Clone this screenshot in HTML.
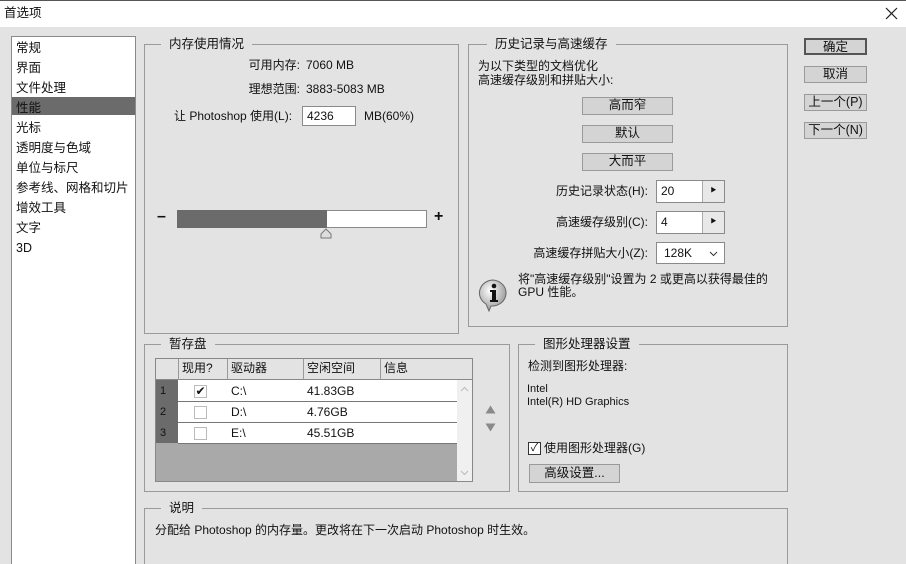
<!DOCTYPE html><html><head><meta charset="utf-8"><style>
*{margin:0;padding:0;box-sizing:border-box}
html,body{width:906px;height:564px;overflow:hidden}
body{background:#e3e3e3;font-family:"Liberation Sans","Noto Sans CJK SC",sans-serif;font-size:12px;color:#111;position:relative}
.a{position:absolute;white-space:nowrap;line-height:14px}
.g{position:absolute;border:1px solid #9a9a9a}
.gt{position:absolute;background:#e3e3e3;padding:0 8px;top:-8px;left:16px;line-height:14px;font-size:12.5px}
.btn{position:absolute;background:#d4d4d4;border:1px solid #9a9a9a;text-align:center;line-height:15px;font-size:12.5px}
.in{position:absolute;background:#fff;border:1px solid #8a8a8a;padding-left:4px;line-height:18px}
.r{text-align:right}
</style></head><body>
<div class="a" style="left:0;top:0;width:906px;height:27px;background:#fff"></div>
<div class="a" style="left:0;top:0;width:906px;height:1px;background:#555"></div>
<div class="a" style="left:4px;top:6px;font-size:12.5px">首选项</div>
<svg class="a" style="left:885px;top:7px" width="13" height="13"><path d="M1 1L12 12M12 1L1 12" stroke="#222" stroke-width="1.2"/></svg>

<div class="a" style="left:11px;top:36px;width:125px;height:540px;background:#fff;border:1px solid #8a8a8a"></div>
<div class="a" style="left:12px;top:97px;width:123px;height:18px;background:#6b6b6b"></div>
<div class="a" style="left:16px;top:38px;line-height:20px;font-size:12.5px">常规<br>界面<br>文件处理<br>性能<br>光标<br>透明度与色域<br>单位与标尺<br>参考线、网格和切片<br>增效工具<br>文字<br>3D</div>

<div class="g" style="left:144px;top:44px;width:315px;height:290px"><div class="gt">内存使用情况</div></div>
<div class="a r" style="left:200px;top:58px;width:100px">可用内存:</div><div class="a" style="left:306px;top:58px">7060 MB</div>
<div class="a r" style="left:200px;top:82px;width:100px">理想范围:</div><div class="a" style="left:306px;top:82px">3883-5083 MB</div>
<div class="a" style="left:174px;top:109px">让 Photoshop 使用(L):</div>
<div class="in" style="left:302px;top:106px;width:54px;height:20px">4236</div>
<div class="a" style="left:364px;top:109px">MB(60%)</div>
<div class="a" style="left:157px;top:210px;font-size:16px;font-weight:bold">–</div>
<div class="a" style="left:177px;top:210px;width:250px;height:18px;background:#fff;border:1px solid #8a8a8a"></div>
<div class="a" style="left:177px;top:210px;width:150px;height:18px;background:#6b6b6b"></div>
<div class="a" style="left:434px;top:210px;font-size:16px;font-weight:bold">+</div>
<svg class="a" style="left:320px;top:228px" width="12" height="11"><path d="M1 10 L1 6 L6 1 L11 6 L11 10 Z" fill="#ddd" stroke="#777"/></svg>

<div class="g" style="left:468px;top:44px;width:320px;height:283px"><div class="gt" style="left:18px">历史记录与高速缓存</div></div>
<div class="a" style="left:478px;top:59px;line-height:14px">为以下类型的文档优化<br>高速缓存级别和拼贴大小:</div>
<div class="btn" style="left:582px;top:97px;width:91px;height:18px">高而窄</div>
<div class="btn" style="left:582px;top:125px;width:91px;height:18px">默认</div>
<div class="btn" style="left:582px;top:153px;width:91px;height:18px">大而平</div>
<div class="a r" style="left:500px;top:184px;width:148px">历史记录状态(H):</div>
<div class="in" style="left:656px;top:180px;width:69px;height:23px;line-height:21px">20</div>
<div class="a" style="left:702px;top:181px;width:22px;height:21px;background:#e8e8e8;border-left:1px solid #aaa;text-align:center;line-height:21px;font-size:6px">▶</div>
<div class="a r" style="left:500px;top:215px;width:148px">高速缓存级别(C):</div>
<div class="in" style="left:656px;top:211px;width:69px;height:23px;line-height:21px">4</div>
<div class="a" style="left:702px;top:212px;width:22px;height:21px;background:#e8e8e8;border-left:1px solid #aaa;text-align:center;line-height:21px;font-size:6px">▶</div>
<div class="a r" style="left:500px;top:246px;width:148px">高速缓存拼贴大小(Z):</div>
<div class="in" style="left:656px;top:242px;width:69px;height:22px;line-height:20px;padding-left:7px">128K<svg style="position:absolute;right:6px;top:8px" width="9" height="6"><path d="M1 1L4.5 4.5L8 1" stroke="#333" fill="none"/></svg></div>
<svg class="a" style="left:477px;top:278px" width="34" height="34"><defs><radialGradient id="rg" cx="40%" cy="35%" r="65%"><stop offset="0" stop-color="#fff"/><stop offset="1" stop-color="#999"/></radialGradient></defs><path d="M16 2 A14 13 0 1 1 14 28 L12 33 L9 26 A14 13 0 0 1 16 2Z" fill="url(#rg)" stroke="#666"/><circle cx="17" cy="8" r="2.3" fill="#111"/><path d="M13 12 H19 V22 H21 V24 H13 V22 H15 V14 H13Z" fill="#111"/></svg>
<div class="a" style="left:518px;top:273px;line-height:13px">将"高速缓存级别"设置为 2 或更高以获得最佳的<br>GPU 性能。</div>

<div class="btn" style="left:804px;top:38px;width:63px;height:17px;border:2px solid #555">确定</div>
<div class="btn" style="left:804px;top:66px;width:63px;height:17px">取消</div>
<div class="btn" style="left:804px;top:94px;width:63px;height:17px">上一个(P)</div>
<div class="btn" style="left:804px;top:122px;width:63px;height:17px">下一个(N)</div>

<div class="g" style="left:144px;top:344px;width:366px;height:148px"><div class="gt">暂存盘</div></div>
<div class="a" style="left:155px;top:358px;width:318px;height:124px;background:#a9a9a9;border:1px solid #888"></div>
<div class="a" style="left:156px;top:359px;width:316px;height:21px;background:#e3e3e3;border-bottom:1px solid #888"></div>
<div class="a" style="left:178px;top:359px;width:1px;height:21px;background:#999"></div>
<div class="a" style="left:227px;top:359px;width:1px;height:21px;background:#999"></div>
<div class="a" style="left:303px;top:359px;width:1px;height:21px;background:#999"></div>
<div class="a" style="left:380px;top:359px;width:1px;height:21px;background:#999"></div>
<div class="a" style="left:182px;top:361px">现用?</div><div class="a" style="left:231px;top:361px">驱动器</div><div class="a" style="left:307px;top:361px">空闲空间</div><div class="a" style="left:384px;top:361px">信息</div>
<div class="a" style="left:156px;top:380px;width:22px;height:63px;background:#6b6b6b"></div>
<div class="a" style="left:178px;top:380px;width:279px;height:63px;background:#fff"></div>
<div class="a" style="left:178px;top:401px;width:279px;height:1px;background:#777"></div>
<div class="a" style="left:178px;top:422px;width:279px;height:1px;background:#777"></div>
<div class="a" style="left:178px;top:443px;width:279px;height:1px;background:#777"></div>
<div class="a" style="left:457px;top:380px;width:15px;height:101px;background:#f0f0f0"></div>
<svg class="a" style="left:460px;top:386px" width="9" height="6"><path d="M1 5L4.5 1.5L8 5" stroke="#bbb" fill="none"/></svg>
<svg class="a" style="left:460px;top:470px" width="9" height="6"><path d="M1 1L4.5 4.5L8 1" stroke="#bbb" fill="none"/></svg>
<div class="a" style="left:160px;top:384px;font-size:11px">1</div><div class="a" style="left:160px;top:405px;font-size:11px">2</div><div class="a" style="left:160px;top:426px;font-size:11px">3</div>
<div class="a" style="left:194px;top:385px;width:13px;height:13px;border:1px solid #bbb;font-size:12px;line-height:11px;text-align:center">✔</div>
<div class="a" style="left:194px;top:406px;width:13px;height:13px;border:1px solid #bbb"></div>
<div class="a" style="left:194px;top:427px;width:13px;height:13px;border:1px solid #bbb"></div>
<div class="a" style="left:231px;top:384px">C:\</div><div class="a" style="left:307px;top:384px">41.83GB</div>
<div class="a" style="left:231px;top:405px">D:\</div><div class="a" style="left:307px;top:405px">4.76GB</div>
<div class="a" style="left:231px;top:426px">E:\</div><div class="a" style="left:307px;top:426px">45.51GB</div>
<svg class="a" style="left:485px;top:405px" width="11" height="9"><path d="M0.5 8.5L5.5 0.5L10.5 8.5Z" fill="#8a8a8a"/></svg>
<svg class="a" style="left:485px;top:423px" width="11" height="9"><path d="M0.5 0.5L5.5 8.5L10.5 0.5Z" fill="#8a8a8a"/></svg>

<div class="g" style="left:518px;top:344px;width:270px;height:148px"><div class="gt">图形处理器设置</div></div>
<div class="a" style="left:528px;top:359px">检测到图形处理器:</div>
<div class="a" style="left:527px;top:383px;font-size:11px;line-height:13px">Intel<br>Intel(R) HD Graphics</div>
<div class="a" style="left:528px;top:442px;width:13px;height:13px;border:1px solid #333;background:#fff;font-size:11px;line-height:11px;text-align:center">✓</div>
<div class="a" style="left:544px;top:441px">使用图形处理器(G)</div>
<div class="btn" style="left:529px;top:464px;width:91px;height:19px;line-height:17px">高级设置...</div>

<div class="g" style="left:144px;top:508px;width:644px;height:70px"><div class="gt">说明</div></div>
<div class="a" style="left:155px;top:523px">分配给 Photoshop 的内存量。更改将在下一次启动 Photoshop 时生效。</div>
</body></html>
